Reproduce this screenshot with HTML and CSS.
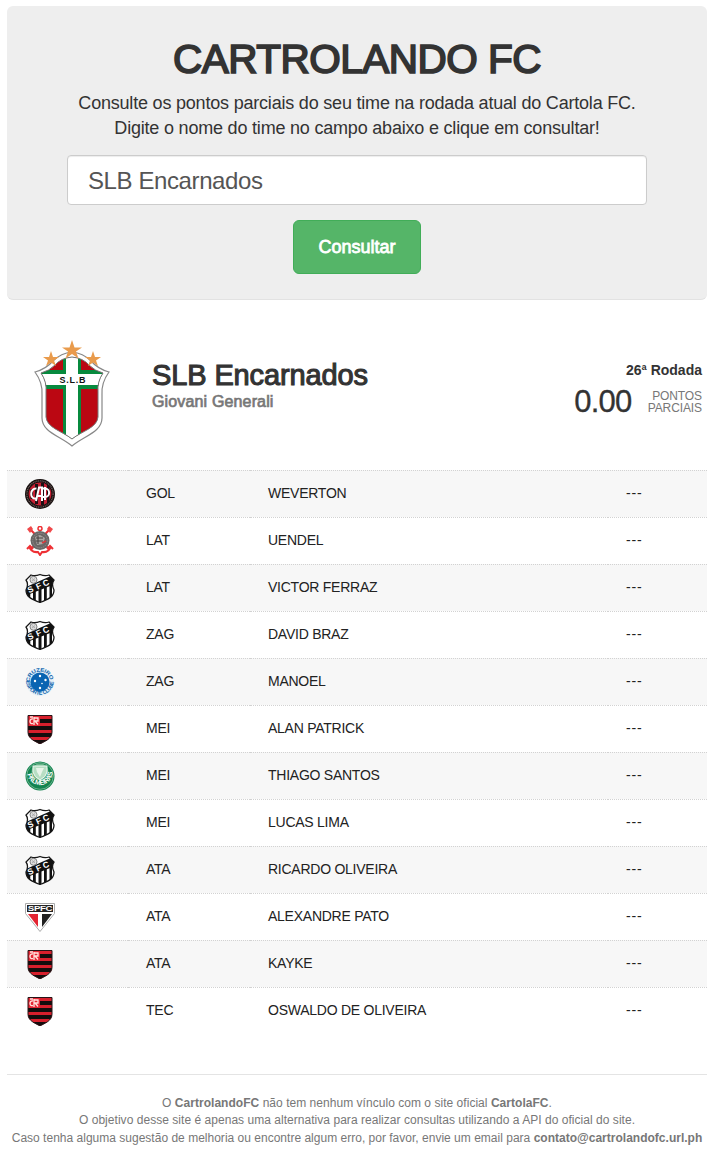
FILE: index.html
```html
<!DOCTYPE html>
<html lang="pt-BR">
<head>
<meta charset="utf-8">
<title>Cartrolando FC</title>
<link rel="stylesheet" href="styles.css">
</head>
<body>
<svg class="defs" aria-hidden="true">
  <defs>
    <clipPath id="santos-clip"><path d="M6 2Q10 3.500 15 1.500Q20 3.500 24 2L29 7Q26 11 29 17C29 25 22 26.500 15 29.500C8 26.500 1 25 1 17Q4 11 1 7Z"/></clipPath>
    <clipPath id="fla-clip"><path d="M3 1.500H27V18C27 25 20 27 15 30C10 27 3 25 3 18Z"/></clipPath>
    <path id="arc-top" d="M4.700 15A10.300 10.300 0 0 1 25.300 15"/>
    <path id="arc-bottom" d="M1.200 14A13.800 13.800 0 0 0 28.800 14"/>
    <path id="arc-palm" d="M2.500 13A12.600 12.600 0 0 0 27.500 13"/>
    <symbol id="atletico" viewBox="0 0 30 30">
      <circle cx="15" cy="15" r="15" fill="#17100f"/>
      <circle cx="15" cy="15" r="13.100" fill="none" stroke="#75605e" stroke-width="1.300" stroke-dasharray="1 .8"/>
      <circle cx="15" cy="15" r="11.400" fill="#c41f32"/>
      <path d="M5.500 10h2.500v10H5.500zM10 5h3v20h-3zM16 4h3v22h-3zM22 6h2.500v18H22z" fill="#1b1013"/>
      <g fill="none" stroke="#fff" stroke-width="2"><path d="M11.500 9.500C4.500 9 4.500 20.500 11 19.500M11 22L14 8.500H17V22M11.500 17H17M16 9.500H20C25.500 9.500 25.500 18 20 18H17M20 8V21"/></g>
    </symbol>
    <symbol id="corinthians" viewBox="0 0 30 30">
      <path d="M5 3L25 24M25 3L5 24M4 20Q6 27 13 26L15 29L17 26Q24 27 26 20M2 23L5 20L8 23M22 23L25 20L28 23" fill="none" stroke="#ee3034" stroke-width="2"/>
      <path d="M2 3L6 0L8 3L5 7ZM28 3L24 0L22 3L25 7Z" fill="#f0484a"/>
      <circle cx="15" cy="2.500" r="2" fill="none" stroke="#ee3034" stroke-width="1.500"/>
      <circle cx="15" cy="14.500" r="9.500" fill="#696665"/>
      <circle cx="15" cy="14.500" r="7.300" fill="none" stroke="#8f8c8b" stroke-width="1" stroke-dasharray="1.500 .8"/>
      <path d="M10 11L15 9L20 12L18 18L12 19Z" fill="#aaa6a3"/>
      <path d="M11 12H18M11 15H18M13 10V18" stroke="#484343" stroke-width="1.100"/>
      <path d="M17 17L21 15" stroke="#d9383b" stroke-width="1.500"/>
    </symbol>
    <symbol id="santos" viewBox="0 0 30 30">
      <g clip-path="url(#santos-clip)">
        <path fill="#fff" d="M0 0h30v30H0z"/>
        <path d="M2.500 13h2.800v17H2.500zM8 13h2.800v17H8zM13.500 13h3v17h-3zM19 12h2.800v18H19zM24.500 10h2.500v20h-2.500z" fill="#111"/>
        <path d="M0 14.500L27 2.500L30 6V11L0 23Z" fill="#111"/>
        <circle cx="8.500" cy="6.800" r="3.500" fill="#ddd" stroke="#777" stroke-width=".9"/>
        <path d="M7 5.500L10 8M10 5.500L7 8" stroke="#999" stroke-width=".7"/>
      </g>
      <g class="crest-text" fill="#fff" font-size="8.500"><text transform="translate(4 20.300) rotate(-24)">S</text><text transform="translate(12.500 16.700) rotate(-24)">F</text><text transform="translate(19.300 13.700) rotate(-24)">C</text></g>
      <path d="M6 2Q10 3.500 15 1.500Q20 3.500 24 2L29 7Q26 11 29 17C29 25 22 26.500 15 29.500C8 26.500 1 25 1 17Q4 11 1 7Z" fill="none" stroke="#171717" stroke-width="1.300"/>
    </symbol>
    <symbol id="cruzeiro" viewBox="0 0 30 30">
      <circle cx="15" cy="15" r="14" fill="#e4f0f8"/>
      <g class="crest-text" fill="#1266ae" font-size="5.300"><text><textPath href="#arc-top" textLength="30" lengthAdjust="spacingAndGlyphs">CRUZEIRO</textPath></text><text><textPath href="#arc-bottom" textLength="42" lengthAdjust="spacingAndGlyphs">ESPORTE CLUBE</textPath></text></g>
      <circle cx="15" cy="15" r="9.600" fill="#0964b2"/>
      <g fill="#fff"><circle cx="15" cy="9" r="1.200"/><circle cx="10" cy="14" r="1.200"/><circle cx="20.500" cy="13" r="1.200"/><circle cx="15" cy="21" r="1.200"/><circle cx="17" cy="16.500" r=".8"/></g>
    </symbol>
    <symbol id="flamengo" viewBox="0 0 30 30">
      <g clip-path="url(#fla-clip)"><path fill="#d71f2c" d="M0 0h30v30H0z"/><path d="M14 5h14v4H14zM2 12h26v4H2zM2 19h26v4H2zM2 26h26v4H2z" fill="#130d0d"/><path d="M3 1h12v11H3z" fill="#e52735"/></g>
      <path d="M9 3V11M8 5C4 4 4 11 8 9.500M9 4H13V7H9M10 7L13 10.500M5 3H8" fill="none" stroke="#ffe5df" stroke-width="1.300"/>
      <path d="M3 1.500H27V18C27 25 20 27 15 30C10 27 3 25 3 18Z" fill="none" stroke="#271417"/>
    </symbol>
    <symbol id="palmeiras" viewBox="0 0 30 30">
      <circle cx="15" cy="15" r="14.500" fill="#138450"/>
      <circle cx="15" cy="15" r="13.300" fill="none" stroke="#a4cfb4" stroke-width=".6"/>
      <circle cx="15" cy="11" r="8.500" fill="#6ab58a"/>
      <path d="M8 5H22V11Q21 16 15 19Q9 16 8 11Z" fill="#b7dec3" stroke="#eef8f0"/>
      <path d="M11 7H19L17 11L15 16L12 11Z" fill="#e9f5ea"/>
      <g class="crest-text" fill="#fff" font-size="7"><text><textPath href="#arc-palm" textLength="38" lengthAdjust="spacingAndGlyphs">PALMEIRAS</textPath></text></g>
    </symbol>
    <symbol id="saopaulo" viewBox="0 0 30 30">
      <path d="M.500 1.500H29.500V11.500L15 29.500L.500 11.500Z" fill="#fff" stroke="#aaa"/>
      <path d="M2 3H28V10H2Z" fill="#242424"/><path d="M3 12H13V25Z" fill="#e32431"/><path d="M17 12H27L17 25Z" fill="#202020"/>
      <text class="crest-text" x="2.800" y="9.300" font-size="7.500" textLength="24.500" lengthAdjust="spacingAndGlyphs" fill="#fff">SPFC</text>
    </symbol>
  </defs>
</svg>
<main class="page">
  <section class="hero">
    <h1 class="title">CARTROLANDO FC</h1>
    <p class="lead">Consulte os pontos parciais do seu time na rodada atual do Cartola FC.<br>Digite o nome do time no campo abaixo e clique em consultar!</p>
    <input class="team-input" type="text" value="SLB Encarnados" aria-label="Nome do time">
    <button class="submit" type="button">Consultar</button>
  </section>
  <header class="team">
    <svg class="team-crest" viewBox="0 0 78 108">
      <path d="M39 12Q28 13 20 21Q13 29 2 32Q10 43 9 55V78C9 92 27 96 39 106C51 96 69 92 69 78V55Q68 43 76 32Q65 29 58 21Q50 13 39 12Z" fill="#fff" stroke="#888" stroke-width="1.200"/>
      <clipPath id="slb-clip"><path d="M39 17Q28 18 22 25Q16 31 8 33Q14 42 13 52V77C14 88 29 91 39 99C49 91 64 88 65 77V52Q64 42 70 33Q62 31 56 25Q50 18 39 17Z"/></clipPath>
      <g clip-path="url(#slb-clip)"><path fill="#bb0712" d="M0 0h78v108H0z"/><path fill="#078a3e" d="M30 10h18v98H30zM0 30h78v19H0z"/><path fill="#fff" d="M33 10h12v98H33zM0 34h78v11H0z"/></g>
      <path d="M39 17Q28 18 22 25Q16 31 8 33Q14 42 13 52V77C14 88 29 91 39 99C49 91 64 88 65 77V52Q64 42 70 33Q62 31 56 25Q50 18 39 17Z" fill="none" stroke="#777"/>
      <g fill="#e99b4c"><path d="M39 0L41.500 7.500H49L43 11.500L45.500 18.500L39 14L32.500 18.500L35 11.500L29 7.500H36.500Z"/><path d="M18 11L20 17H26L21 20.500L23 26L18 22.500L13 26L15 20.500L10 17H16Z"/><path d="M60 11L62 17H68L63 20.500L65 26L60 22.500L55 26L57 20.500L52 17H58Z"/></g>
      <text class="crest-text" x="26.500" y="43" font-size="9" textLength="26" fill="#111">S.L.B</text>
    </svg>
    <div class="identity"><h2 class="team-name">SLB Encarnados</h2><p class="owner">Giovani Generali</p></div>
    <div class="score"><p class="round">26ª Rodada</p><div class="points"><span class="points-value">0.00</span><span class="points-label"><span>PONTOS</span><span>PARCIAIS</span></span></div></div>
  </header>
  <div class="players">
    <div class="player"><div><svg class="club"><use href="#atletico"/></svg></div><div>GOL</div><div>WEVERTON</div><div>---</div></div>
    <div class="player"><div><svg class="club"><use href="#corinthians"/></svg></div><div>LAT</div><div>UENDEL</div><div>---</div></div>
    <div class="player"><div><svg class="club"><use href="#santos"/></svg></div><div>LAT</div><div>VICTOR FERRAZ</div><div>---</div></div>
    <div class="player"><div><svg class="club"><use href="#santos"/></svg></div><div>ZAG</div><div>DAVID BRAZ</div><div>---</div></div>
    <div class="player"><div><svg class="club"><use href="#cruzeiro"/></svg></div><div>ZAG</div><div>MANOEL</div><div>---</div></div>
    <div class="player"><div><svg class="club"><use href="#flamengo"/></svg></div><div>MEI</div><div>ALAN PATRICK</div><div>---</div></div>
    <div class="player"><div><svg class="club"><use href="#palmeiras"/></svg></div><div>MEI</div><div>THIAGO SANTOS</div><div>---</div></div>
    <div class="player"><div><svg class="club"><use href="#santos"/></svg></div><div>MEI</div><div>LUCAS LIMA</div><div>---</div></div>
    <div class="player"><div><svg class="club"><use href="#santos"/></svg></div><div>ATA</div><div>RICARDO OLIVEIRA</div><div>---</div></div>
    <div class="player"><div><svg class="club"><use href="#saopaulo"/></svg></div><div>ATA</div><div>ALEXANDRE PATO</div><div>---</div></div>
    <div class="player"><div><svg class="club"><use href="#flamengo"/></svg></div><div>ATA</div><div>KAYKE</div><div>---</div></div>
    <div class="player"><div><svg class="club"><use href="#flamengo"/></svg></div><div>TEC</div><div>OSWALDO DE OLIVEIRA</div><div>---</div></div>
  </div>
  <footer class="footer">
    <p>O <b>CartrolandoFC</b> não tem nenhum vínculo com o site oficial <b>CartolaFC</b>.</p>
    <p class="note-goal">O objetivo desse site é apenas uma alternativa para realizar consultas utilizando a API do oficial do site.</p>
    <p class="note-contact">Caso tenha alguma sugestão de melhoria ou encontre algum erro, por favor, envie um email para <b>contato@cartrolandofc.url.ph</b></p>
  </footer>
</main>
</body>
</html>
```
FILE: styles.css
```css
* { box-sizing: border-box; }
body { margin: 0; background: #fff; color: #333; font-family: "Liberation Sans", Arial, sans-serif; font-size: 14px; }
h1, h2, p { margin: 0; font-weight: 400; }
.defs { display: block; width: 0; height: 0; }
.page { width: 700px; margin: 6px 0 0 7px; }
.hero { display: flex; flex-direction: column; align-items: center; height: 294px; padding-top: 28px; background: #eee; border-bottom: 1px solid #e2e2e2; border-radius: 6px; }
.title { font-size: 40.500px; line-height: 50px; letter-spacing: -.5px; white-space: nowrap; -webkit-text-stroke: 1.700px #333; }
.lead { margin-top: 7px; font-size: 18px; line-height: 25px; letter-spacing: -.2px; text-align: center; white-space: nowrap; }
.team-input { width: 580px; height: 50px; margin-top: 14px; padding: 2px 20px 0; border: 1px solid #ccc; border-radius: 4px; box-shadow: inset 0 1px 1px rgba(0,0,0,.075); color: #555; background: #fff; font: 24px "Liberation Sans", Arial, sans-serif; letter-spacing: -.4px; }
.submit { width: 128px; height: 54px; margin-top: 15px; padding: 0; border: 1px solid #41ad58; border-radius: 6px; background: #55b568; color: #fff; font: 18px "Liberation Sans", Arial, sans-serif; -webkit-text-stroke: .8px #fff; }
.team { display: flex; height: 170px; padding: 40px 5px 0 26px; }
.team-crest { width: 78px; height: 108px; flex: none; }
.crest-text { font-family: "Liberation Sans", Arial, sans-serif; font-weight: 700; }
.identity { flex: 1; padding: 18px 0 0 41px; }
.team-name { font-size: 29px; line-height: 34px; letter-spacing: -.12px; -webkit-text-stroke: 1.100px #333; }
.owner { margin-top: 1px; font-size: 16px; line-height: 18px; letter-spacing: .15px; color: #777; -webkit-text-stroke: .7px #777; }
.score { text-align: right; padding-top: 22px; }
.round { font-size: 14px; line-height: 16px; font-weight: 700; }
.points { display: flex; justify-content: flex-end; align-items: center; gap: 16px; height: 48px; }
.points-value { font-size: 31px; letter-spacing: -.7px; -webkit-text-stroke: .3px #333; }
.points-label { display: flex; flex-direction: column; font-size: 12px; color: #777; letter-spacing: -.1px; }
.points-label span { line-height: 12px; }
.player { display: grid; grid-template-columns: 121px 122px 358px 99px; height: 47px; color: #222; }
.player:nth-child(odd) { background: #f7f7f7; }
.player > div { padding: 14px 18px 0; border-top: 1px dotted #d2d2d2; font-size: 14px; line-height: 17px; white-space: nowrap; letter-spacing: -.25px; }
.player > div:first-child { padding-top: 8px; }
.player > div:last-child { letter-spacing: .9px; }
.club { display: block; width: 30px; height: 30px; }
.footer { margin-top: 40px; padding-top: 19.500px; border-top: 1px solid #e4e4e4; color: #777; font-size: 12px; line-height: 17.500px; letter-spacing: .035px; text-align: center; white-space: nowrap; }
.note-contact { letter-spacing: .01px; }
```
